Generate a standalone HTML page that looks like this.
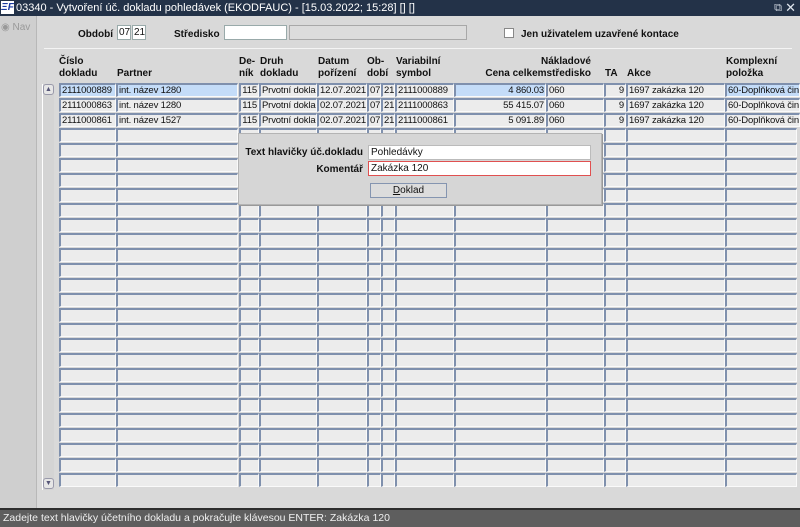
<!DOCTYPE html>
<html><head><meta charset="utf-8"><style>
*{margin:0;padding:0;box-sizing:border-box}
body{width:800px;height:527px;overflow:hidden;background:#d9d9d9;font-family:"Liberation Sans",Arial,sans-serif;font-size:10px;color:#111;position:relative}
.a{position:absolute;white-space:nowrap}
#title{left:0;top:0;width:800px;height:16px;background:#233248;color:#fff;font-size:11px;line-height:16px;padding-left:16px}
#logo{left:1px;top:1px;width:13px;height:13px;background:#fff;color:#1a3aa0;font-weight:bold;font-style:italic;font-size:10px;line-height:13px;text-align:center}
#left{left:0;top:16px;width:37px;height:492px;background:#cfcfcf;border-right:1px solid #b8b8b8}
.b{font-weight:bold;font-size:10px}
.c{position:absolute;height:14px;background:#ececec;border-top:2px solid #7f90ad;border-left:2px solid #7f90ad;border-bottom:1px solid #fafafa;border-right:1px solid #fafafa;line-height:11px;padding:0 1px;white-space:nowrap;overflow:hidden;font-size:9.5px;letter-spacing:-0.15px}
.s{background:#c4dcf8}
.r{text-align:right}
.in{position:absolute;background:#fff;border:1px solid #9aa;height:15px;line-height:13px;padding:0 2px;font-size:10px;white-space:nowrap}
#status{left:0;top:508px;width:800px;height:19px;background:#5e5e5e;border-top:2px solid #2d2d2d;color:#f0f0f0;font-size:10.5px;line-height:16px;padding-left:3px}
</style></head><body>
<div class="a" id="title">03340 - Vytvoření úč. dokladu pohledávek (EKODFAUC) - [15.03.2022; 15:28] [] []</div>
<div class="a" id="logo">ΞF</div>
<div class="a" style="right:18px;top:2px;color:#cfd6e0;font-size:11px">⧉</div>
<div class="a" style="right:4px;top:0px;color:#e0e6ee;font-size:13px">✕</div>
<div class="a" id="left"></div>
<div class="a" style="left:1px;top:22px;color:#999;font-size:10px">◉ Nav</div>
<div class="a b" style="left:78px;top:29px">Období</div>
<div class="in" style="left:117px;top:25px;width:14px;padding:0 1px">07</div>
<div class="in" style="left:132px;top:25px;width:14px;padding:0 1px">21</div>
<div class="a b" style="left:174px;top:29px">Středisko</div>
<div class="in" style="left:224px;top:25px;width:63px"></div>
<div class="in" style="left:289px;top:25px;width:178px;background:#dcdcdc;border-color:#a8a8a8"></div>
<div class="a" style="left:504px;top:28px;width:10px;height:10px;background:#fff;border:1px solid #888"></div>
<div class="a b" style="left:521px;top:29px">Jen uživatelem uzavřené kontace</div>
<div class="a" style="left:44px;top:48px;width:748px;height:1px;background:#aaa;border-bottom:1px solid #f4f4f4"></div>
<div class="a b" style="left:59px;top:56px;line-height:12px">Číslo<br>dokladu</div>
<div class="a b" style="left:117px;top:68px">Partner</div>
<div class="a b" style="left:239px;top:56px;line-height:12px">De-<br>ník</div>
<div class="a b" style="left:260px;top:56px;line-height:12px">Druh<br>dokladu</div>
<div class="a b" style="left:318px;top:56px;line-height:12px">Datum<br>pořízení</div>
<div class="a b" style="left:367px;top:56px;line-height:12px">Ob-<br>dobí</div>
<div class="a b" style="left:396px;top:56px;line-height:12px">Variabilní<br>symbol</div>
<div class="a b" style="left:470px;top:56px;line-height:12px;text-align:right;width:121px">Nákladové<br>Cena celkemstředisko</div>
<div class="a b" style="left:605px;top:68px">TA</div>
<div class="a b" style="left:627px;top:68px">Akce</div>
<div class="a b" style="left:726px;top:56px;line-height:12px">Komplexní<br>položka</div>
<div class="a" style="left:42px;top:84px;width:12px;height:406px;border-left:1px solid #fff;background:#d4d4d4"></div>
<div class="a" style="left:43px;top:84px;width:11px;height:11px;border:1px solid #99a;border-radius:3px;background:#e6e6e6;font-size:7px;line-height:9px;text-align:center;color:#557">▲</div>
<div class="a" style="left:43px;top:478px;width:11px;height:11px;border:1px solid #99a;border-radius:3px;background:#e6e6e6;font-size:7px;line-height:9px;text-align:center;color:#557">▼</div>
<div id="grid">
<div class="c s" style="left:59px;top:83px;width:57px">2111000889</div>
<div class="c s" style="left:116px;top:83px;width:122px">int. název 1280</div>
<div class="c r" style="left:239px;top:83px;width:20px">115</div>
<div class="c" style="left:259px;top:83px;width:58px">Prvotní doklad</div>
<div class="c" style="left:317px;top:83px;width:50px">12.07.2021</div>
<div class="c" style="left:367px;top:83px;width:14px">07</div>
<div class="c" style="left:381px;top:83px;width:14px">21</div>
<div class="c" style="left:395px;top:83px;width:59px">2111000889</div>
<div class="c s r" style="left:454px;top:83px;width:92px">4 860.03</div>
<div class="c" style="left:546px;top:83px;width:58px">060</div>
<div class="c r" style="left:604px;top:83px;width:22px">9</div>
<div class="c" style="left:626px;top:83px;width:99px">1697 zakázka 120</div>
<div class="c s" style="left:725px;top:83px;width:75px">60-Doplňková činn</div>
<div class="c" style="left:59px;top:98px;width:57px">2111000863</div>
<div class="c" style="left:116px;top:98px;width:122px">int. název 1280</div>
<div class="c r" style="left:239px;top:98px;width:20px">115</div>
<div class="c" style="left:259px;top:98px;width:58px">Prvotní doklad</div>
<div class="c" style="left:317px;top:98px;width:50px">02.07.2021</div>
<div class="c" style="left:367px;top:98px;width:14px">07</div>
<div class="c" style="left:381px;top:98px;width:14px">21</div>
<div class="c" style="left:395px;top:98px;width:59px">2111000863</div>
<div class="c r" style="left:454px;top:98px;width:92px">55 415.07</div>
<div class="c" style="left:546px;top:98px;width:58px">060</div>
<div class="c r" style="left:604px;top:98px;width:22px">9</div>
<div class="c" style="left:626px;top:98px;width:99px">1697 zakázka 120</div>
<div class="c" style="left:725px;top:98px;width:75px">60-Doplňková činn</div>
<div class="c" style="left:59px;top:113px;width:57px">2111000861</div>
<div class="c" style="left:116px;top:113px;width:122px">int. název 1527</div>
<div class="c r" style="left:239px;top:113px;width:20px">115</div>
<div class="c" style="left:259px;top:113px;width:58px">Prvotní doklad</div>
<div class="c" style="left:317px;top:113px;width:50px">02.07.2021</div>
<div class="c" style="left:367px;top:113px;width:14px">07</div>
<div class="c" style="left:381px;top:113px;width:14px">21</div>
<div class="c" style="left:395px;top:113px;width:59px">2111000861</div>
<div class="c r" style="left:454px;top:113px;width:92px">5 091.89</div>
<div class="c" style="left:546px;top:113px;width:58px">060</div>
<div class="c r" style="left:604px;top:113px;width:22px">9</div>
<div class="c" style="left:626px;top:113px;width:99px">1697 zakázka 120</div>
<div class="c" style="left:725px;top:113px;width:75px">60-Doplňková činn</div>
</div>
<script>
var cols=[[59,57],[116,122],[239,20],[259,58],[317,50],[367,14],[381,14],[395,59],[454,92],[546,58],[604,22],[626,99],[725,72]];
var g=document.getElementById('grid'),h='';
for(var r=3;r<27;r++){var t=83+r*15;for(var i=0;i<cols.length;i++)h+='<div class="c" style="left:'+cols[i][0]+'px;top:'+t+'px;width:'+cols[i][1]+'px"></div>';}
g.insertAdjacentHTML('beforeend',h);
</script>
<div class="a" style="left:238px;top:133px;width:364px;height:72px;background:#d6d6d6;border:1px solid #b4b4b4;box-shadow:1px 1px 0 #999"></div>
<div class="a b" style="left:230px;top:147px;width:133px;text-align:right">Text hlavičky úč.dokladu</div>
<div class="in" style="left:368px;top:145px;width:223px;border-color:#bbb">Pohledávky</div>
<div class="a b" style="left:230px;top:164px;width:133px;text-align:right">Komentář</div>
<div class="in" style="left:368px;top:161px;width:223px;border:1px solid #e05050">Zakázka 120</div>
<div class="a" style="left:370px;top:183px;width:77px;height:15px;background:#dcdcdc;border:1px solid #8595b0;text-align:center;line-height:13px;font-size:10px"><u>D</u>oklad</div>
<div class="a" id="status">Zadejte text hlavičky účetního dokladu a pokračujte klávesou ENTER: Zakázka 120</div>
</body></html>
